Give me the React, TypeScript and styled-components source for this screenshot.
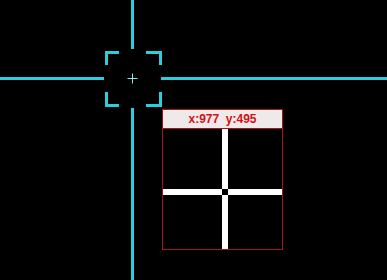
import styled, { createGlobalStyle } from 'styled-components'

const GlobalStyle = createGlobalStyle`
  html, body {
    margin: 0;
    padding: 0;
    background: #000;
  }
  #root {
    width: 387px;
    height: 280px;
  }
`

const CYAN = '#27d0dc'
const RED = '#a3151b'

// the crosshair is a 3x3 grid: arms around the reticle in the middle
const Canvas = styled.div`
  position: relative;
  width: 387px;
  height: 280px;
  background: #000;
  overflow: hidden;
  display: grid;
  grid-template-columns: 104px 57px 1fr;
  grid-template-rows: 50px 57px 1fr;
  font-family: 'Liberation Sans', Arial, sans-serif;
`

const Arm = styled.div<{ vertical?: boolean; gapStart?: boolean }>`
  background: ${CYAN};
  ${({ vertical, gapStart }) =>
    vertical
      ? `width: 3px; justify-self: center; margin-top: ${gapStart ? '1px' : '0'}; margin-bottom: ${gapStart ? '0' : '1px'};`
      : `height: 3px; align-self: center;`}
`

const Empty = styled.div``

const Reticle = styled.svg`
  display: block;
  overflow: visible;
`

const Magnifier = styled.div`
  position: absolute;
  left: 162px;
  top: 109px;
  width: 119px;
  border: 1px solid ${RED};
  background: #000;
  display: flex;
  flex-direction: column;
`

const Coords = styled.div`
  height: 18px;
  background: #efe9e9;
  border-bottom: 1px solid ${RED};
  color: #d41016;
  font-size: 12px;
  font-weight: 700;
  line-height: 18px;
  text-align: center;
  white-space: pre;
`

const Zoom = styled.svg`
  display: block;
`

export default function App() {
  return (
    <>
      <GlobalStyle />
      <Canvas>
        <Empty />
        <Arm vertical />
        <Empty />

        <Arm />
        <Reticle width="57" height="57" viewBox="0 0 57 57">
          <g fill="none" stroke={CYAN} strokeWidth="3">
            <path d="M2.5 15V2.5H15" />
            <path d="M42 2.5H56.5V15" />
            <path d="M2.5 42V55.5H15" />
            <path d="M42 55.5H56.5V42" />
          </g>
          <g stroke="#8fe6ec" strokeWidth="1">
            <path d="M23.5 28.5H33.5" />
            <path d="M28.5 23.5V33.5" />
          </g>
        </Reticle>
        <Arm />

        <Empty />
        <Arm vertical gapStart />
        <Empty />

        <Magnifier>
          <Coords>{'x:977  y:495'}</Coords>
          <Zoom width="119" height="120" viewBox="0 0 119 120">
            <rect x="0" y="0" width="119" height="120" fill="#000" />
            <rect x="59" y="0" width="6" height="120" fill="#fff" />
            <rect x="0" y="60" width="119" height="6" fill="#fff" />
            <rect x="59" y="60" width="6" height="6" fill="#000" />
          </Zoom>
        </Magnifier>
      </Canvas>
    </>
  )
}
